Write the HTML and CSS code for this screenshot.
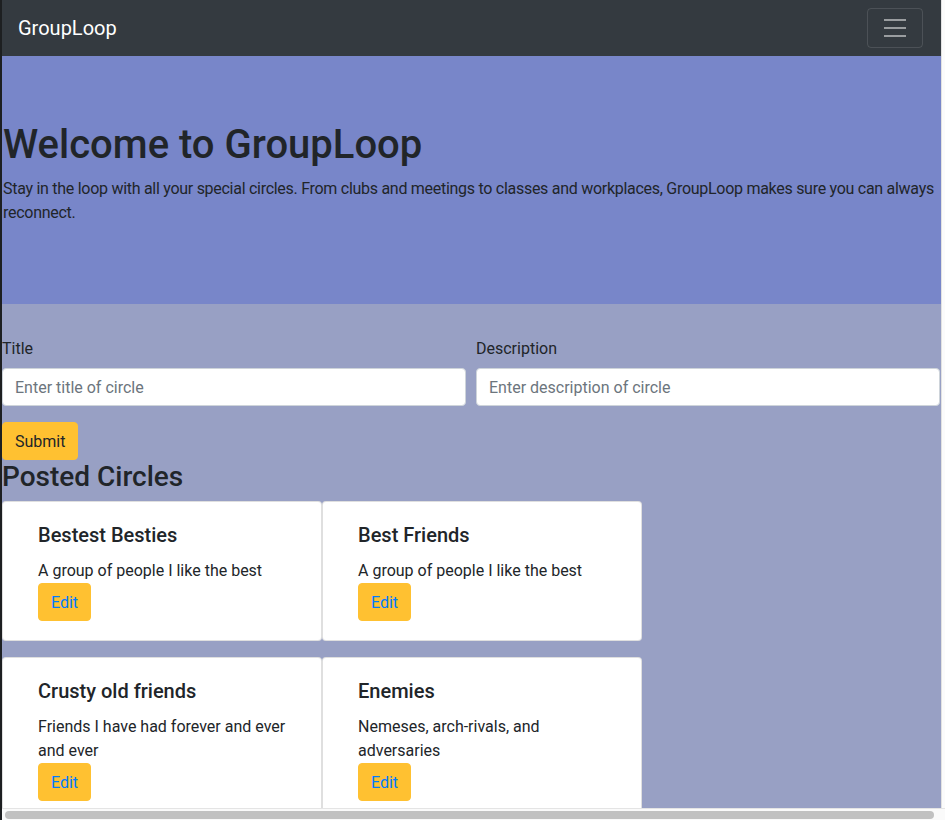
FILE: index.html
```html
<!DOCTYPE html>
<html lang="en">
<head>
<meta charset="utf-8">
<title>GroupLoop</title>
<link rel="stylesheet" href="styles.css">
</head>
<body>
<div class="edge-left"></div>
<div class="page">
  <nav class="navbar">
    <a class="brand" href="#">GroupLoop</a>
    <button class="toggler" type="button" aria-label="Toggle navigation">
      <svg width="30" height="30" viewBox="0 0 30 30" aria-hidden="true">
        <path d="M4 7h22M4 15h22M4 23h22" stroke="rgba(255,255,255,0.5)" stroke-width="2" stroke-linecap="butt"/>
      </svg>
    </button>
  </nav>
  <header class="jumbotron">
    <h1 class="jumbo-title">Welcome to GroupLoop</h1>
    <p class="jumbo-lead">Stay in the loop with all your special circles. From clubs and meetings to classes and workplaces, GroupLoop makes sure you can always reconnect.</p>
  </header>
  <main class="content">
    <form class="circle-form">
      <div class="form-row">
        <div class="form-group">
          <label class="label" for="title">Title</label>
          <input class="input" id="title" type="text" placeholder="Enter title of circle">
        </div>
        <div class="form-group">
          <label class="label" for="desc">Description</label>
          <input class="input" id="desc" type="text" placeholder="Enter description of circle">
        </div>
      </div>
      <button class="btn btn-submit" type="button">Submit</button>
    </form>
    <h3 class="section-title">Posted Circles</h3>
    <div class="cards">
      <div class="card">
        <h5 class="card-title">Bestest Besties</h5>
        <p class="card-text">A group of people I like the best</p>
        <button class="btn btn-edit" type="button">Edit</button>
      </div>
      <div class="card">
        <h5 class="card-title">Best Friends</h5>
        <p class="card-text">A group of people I like the best</p>
        <button class="btn btn-edit" type="button">Edit</button>
      </div>
      <div class="card">
        <h5 class="card-title">Crusty old friends</h5>
        <p class="card-text">Friends I have had forever and ever and ever</p>
        <button class="btn btn-edit" type="button">Edit</button>
      </div>
      <div class="card">
        <h5 class="card-title">Enemies</h5>
        <p class="card-text">Nemeses, arch-rivals, and adversaries</p>
        <button class="btn btn-edit" type="button">Edit</button>
      </div>
    </div>
  </main>
</div>
<div class="edge-right"></div>
<div class="hscroll"><div class="hscroll-thumb"></div></div>
</body>
</html>
```
FILE: styles.css
```css
html {
  overflow: hidden;
}
* {
  box-sizing: border-box;
}
body {
  margin: 0;
  display: flex;
  align-items: flex-start;
  background: #ffffff;
  font-family: Roboto, "Noto Sans", "Liberation Sans", sans-serif;
  font-size: 16px;
  line-height: 1.5;
  color: #212529;
  min-height: 820px;
}
.edge-left {
  width: 2px;
  align-self: stretch;
  background: #1d1f21;
  flex: none;
}
.edge-right {
  width: 4px;
  align-self: stretch;
  background: #fbfbfb;
  border-left: 1px solid #e2e2e2;
  flex: none;
}
.page {
  width: 939px;
  flex: none;
  background: #98a0c4;
  min-height: 820px;
}
.navbar {
  height: 56px;
  background: #343a40;
  display: flex;
  align-items: center;
  justify-content: space-between;
  padding: 0 18px 0 16px;
}
.brand {
  color: #fff;
  text-decoration: none;
  font-size: 20px;
  line-height: 30px;
}
.toggler {
  width: 56px;
  height: 40px;
  padding: 4px 12px;
  background: transparent;
  border: 1px solid rgba(255, 255, 255, 0.12);
  border-radius: 4px;
  display: flex;
  align-items: center;
  justify-content: center;
}
.toggler svg {
  display: block;
}
.jumbotron {
  background: #7886c9;
  padding: 65px 0 63px 1px;
  margin: 0 0 32px;
}
.jumbo-title {
  margin: 0 0 8px;
  font-size: 40px;
  font-weight: 500;
  line-height: 1.2;
}
.jumbo-lead {
  margin: 0 0 16px;
  font-size: 16px;
  line-height: 24px;
  letter-spacing: -0.28px;
}
.content {
  padding: 0;
}
.form-row {
  display: grid;
  grid-template-columns: 464px 464px;
  column-gap: 10px;
}
.form-group {
  margin-bottom: 16px;
  display: flex;
  flex-direction: column;
}
.label {
  display: block;
  margin-bottom: 7px;
  padding-top: 1px;
  line-height: 24px;
}
.input {
  height: 38px;
  padding: 6px 12px;
  font: inherit;
  font-size: 16px;
  color: #495057;
  background: #fff;
  border: 1px solid #ced4da;
  border-radius: 4px;
}
.input::placeholder {
  color: #6c757d;
}
.btn {
  font: inherit;
  font-size: 16px;
  line-height: 24px;
  padding: 7px 12px 5px;
  border: 1px solid #ffc131;
  border-radius: 4px;
  background: #ffc131;
  display: inline-block;
}
.btn-submit {
  color: #212529;
}
.btn-edit {
  color: #007bff;
}
.section-title {
  margin: 0 0 8px;
  font-size: 28px;
  font-weight: 500;
  line-height: 33px;
}
.cards {
  display: flex;
  flex-wrap: wrap;
  width: 640px;
}
.card {
  width: 320px;
  background: #fff;
  border: 1px solid rgba(0, 0, 0, 0.125);
  border-radius: 4px;
  padding: 21px 35px 19px;
  margin-bottom: 16px;
}
.card-title {
  margin: 0 0 12px;
  font-size: 20px;
  font-weight: 500;
  line-height: 24px;
}
.card-text {
  margin: 0;
  line-height: 24px;
}
.hscroll {
  position: fixed;
  left: 2px;
  right: 0;
  bottom: 0;
  height: 12px;
  background: #fafafa;
  border-top: 1px solid #e4e4e4;
  padding: 2px 8px 1px 3px;
}
.hscroll-thumb {
  height: 8px;
  width: 929px;
  background: #c1c1c1;
  border-radius: 4px;
}
```
